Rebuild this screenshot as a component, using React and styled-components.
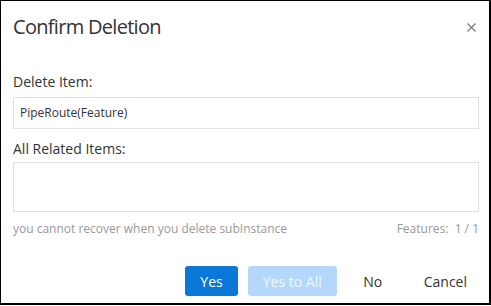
import styled, { createGlobalStyle } from "styled-components";

const GlobalStyle = createGlobalStyle`
  html, body {
    margin: 0;
    padding: 0;
    background: #fff;
  }
  body {
    font-family: "Open Sans", "Noto Sans", Arial, sans-serif;
    color: #333;
  }
`;

const Dialog = styled.div`
  box-sizing: border-box;
  width: 491px;
  height: 305px;
  border: 1px solid #000;
  border-right-width: 2px;
  border-bottom-width: 2px;
  background: #fff;
  display: flex;
  flex-direction: column;
`;

const Header = styled.div`
  height: 52px;
  padding: 0 10px 0 12px;
  display: flex;
  align-items: center;
  justify-content: space-between;
`;

const Title = styled.h2`
  margin: 0;
  font-size: 20px;
  font-weight: 400;
  line-height: 1;
  letter-spacing: -0.7px;
  color: #333;
`;

const Close = styled.button`
  border: none;
  background: none;
  padding: 0;
  width: 12px;
  height: 12px;
  margin-right: 2px;
  cursor: pointer;
  display: flex;
  align-items: center;
  justify-content: center;
`;

const Body = styled.div`
  padding: 0 10px 0 12px;
  display: flex;
  flex-direction: column;
`;

const Label = styled.div`
  font-size: 14px;
  line-height: 20px;
  margin-top: ${(p) => p.$top}px;
  color: #333;
`;

const Field = styled.div`
  box-sizing: border-box;
  height: ${(p) => p.$height}px;
  margin-top: ${(p) => p.$top}px;
  border: 1px solid #e1e1e1;
  padding: 0 6px;
  font-size: 12px;
  line-height: 30px;
  color: #333;
`;

const Hint = styled.div`
  margin-top: 8px;
  display: flex;
  justify-content: space-between;
  font-size: 12px;
  line-height: 18px;
  color: #999;
`;

const Footer = styled.div`
  margin-top: 28px;
  padding: 0 7px 0 12px;
  display: flex;
  justify-content: flex-end;
  gap: 10px;
`;

const Button = styled.button`
  height: 30px;
  min-width: 52px;
  padding: 0 15px;
  border: none;
  border-radius: 3px;
  font-family: inherit;
  font-size: 14px;
  cursor: pointer;
  background: ${(p) =>
    p.$variant === "primary"
      ? "#0a78d7"
      : p.$variant === "disabled"
      ? "#b4d8fc"
      : "transparent"};
  color: ${(p) =>
    p.$variant === "primary"
      ? "#fff"
      : p.$variant === "disabled"
      ? "#eef6ff"
      : "#333"};
`;

export default function App() {
  return (
    <>
      <GlobalStyle />
      <Dialog>
        <Header>
          <Title>Confirm Deletion</Title>
          <Close aria-label="close">
            <svg width="9" height="9" viewBox="0 0 9 9">
              <path d="M0.5 0.5 L8.5 8.5 M8.5 0.5 L0.5 8.5" stroke="#7a7a7a" strokeWidth="1.2" />
            </svg>
          </Close>
        </Header>
        <Body>
          <Label $top={19}>Delete Item:</Label>
          <Field $height={32} $top={5}>PipeRoute(Feature)</Field>
          <Label $top={10}>All Related Items:</Label>
          <Field $height={50} $top={3} />
          <Hint>
            <span>you cannot recover when you delete subInstance</span>
            <span>Features:&nbsp; 1 / 1</span>
          </Hint>
        </Body>
        <Footer>
          <Button $variant="primary">Yes</Button>
          <Button $variant="disabled" disabled>Yes to All</Button>
          <Button>No</Button>
          <Button>Cancel</Button>
        </Footer>
      </Dialog>
    </>
  );
}
